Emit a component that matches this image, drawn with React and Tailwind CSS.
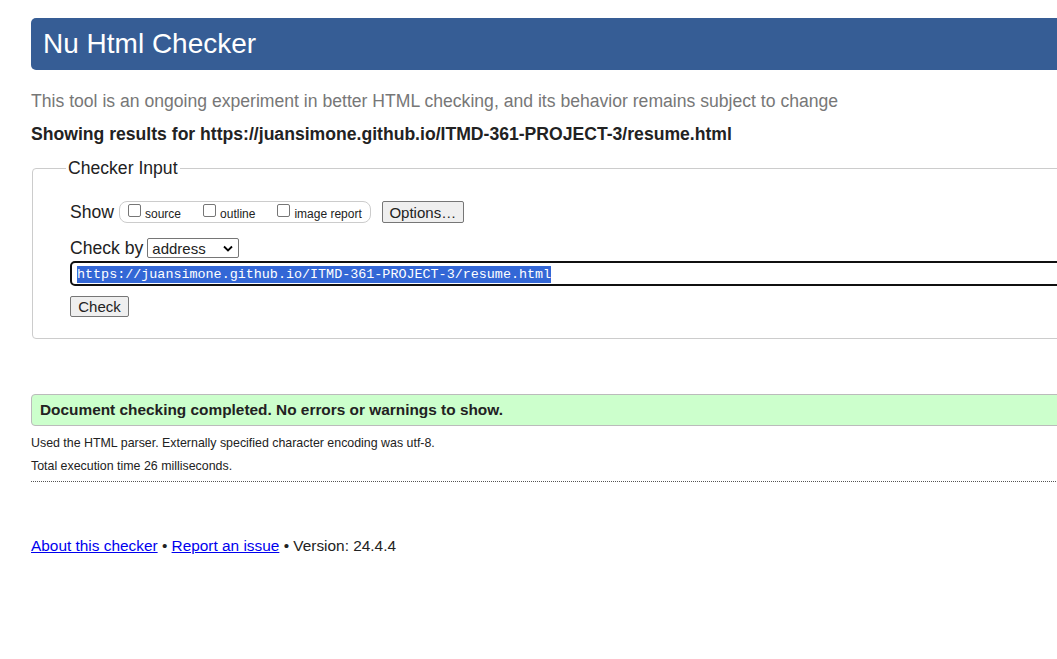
import React from 'react';

const Checkbox = ({ label }) => (
    <label className="flex items-center gap-[4px] shrink-0 whitespace-nowrap">
        <span className="w-[13px] h-[13px] border border-[#767676] rounded-[2px] bg-white inline-block mb-[3px]" />
        <span className="text-[12px] text-[#222] leading-none mt-[3px]">{label}</span>
    </label>
);

const App = () => {
    return (
        <div className="w-screen min-h-screen bg-white overflow-hidden font-['Liberation_Sans',Arial,sans-serif] text-[#222]">
            <div className="pl-[31px] pt-[18px] w-[1120px]">
                <header className="h-[52px] bg-[#365d95] rounded-[5px] flex items-center pl-[12px]">
                    <h1 className="text-white text-[28px] leading-none">Nu Html Checker</h1>
                </header>

                <p className="mt-[21px] text-[17.6px] leading-[20px] text-[#777]">
                    This tool is an ongoing experiment in better HTML checking, and its behavior remains subject to change
                </p>
                <p className="mt-[13px] text-[17.6px] leading-[20px] font-bold text-[#222]">
                    Showing results for https://juansimone.github.io/ITMD-361-PROJECT-3/resume.html
                </p>

                <fieldset className="mt-[14px] ml-[1px] border border-[#ccc] rounded-[4px] pl-[37px] pr-4 pb-[19px] pt-[23px]">
                    <legend className="ml-[-4px] px-[2px] text-[17.6px] leading-[20px] text-[#222]">Checker Input</legend>

                    <div className="flex items-center h-[22px]">
                        <span className="text-[17.6px] mr-[5px]">Show</span>
                        <div className="flex items-center gap-[22px] border border-[#ccc] rounded-[8px] h-[22px] pl-[8px] pr-[8px] shrink-0 whitespace-nowrap">
                            <Checkbox label="source" />
                            <Checkbox label="outline" />
                            <Checkbox label="image report" />
                        </div>
                        <button className="ml-[11px] h-[22px] w-[82px] border border-[#767676] bg-[#efefef] rounded-[2px] text-[15px] leading-none">
                            Options…
                        </button>
                    </div>

                    <div className="flex items-center mt-[15px] h-[20px]">
                        <span className="text-[17.6px] mr-[4px]">Check by</span>
                        <div className="h-[20px] w-[92px] border border-[#767676] rounded-[2px] flex items-center justify-between px-[4px] bg-white">
                            <span className="text-[15px] leading-none">address</span>
                            <svg width="10" height="7" viewBox="0 0 10 7" className="mr-[1px]">
                                <path d="M1 1.5l4 4 4-4" stroke="#000" strokeWidth="1.8" fill="none" />
                            </svg>
                        </div>
                    </div>

                    <div className="mt-[3px] h-[25px] border-2 border-[#101010] rounded-[5px] flex items-center pl-[5px] pt-[1px] bg-white">
                        <span className="bg-[#3367d6] text-white font-['Liberation_Mono',monospace] text-[13.4px] leading-[17px]">
                            https://juansimone.github.io/ITMD-361-PROJECT-3/resume.html
                        </span>
                    </div>

                    <button className="mt-[10px] h-[21px] w-[59px] border border-[#767676] bg-[#efefef] rounded-[2px] text-[15px] leading-none">
                        Check
                    </button>
                </fieldset>

                <div className="mt-[55px] h-[32px] bg-[#ccffcc] border border-[#bbb] rounded-[4px] flex items-center pl-[8px]">
                    <span className="font-bold text-[15.4px]">Document checking completed. No errors or warnings to show.</span>
                </div>

                <p className="mt-[9px] text-[12.4px] leading-[16px]">
                    Used the HTML parser. Externally specified character encoding was utf-8.
                </p>
                <p className="mt-[7px] text-[12.4px] leading-[16px]">Total execution time 26 milliseconds.</p>
                <div className="mt-[7px] border-t border-dotted border-[#555]" />

                <p className="mt-[55px] text-[15.4px] leading-[18px] text-[#222]">
                    <a href="#" className="text-[#0000ee] underline">About this checker</a>
                    {' • '}
                    <a href="#" className="text-[#0000ee] underline">Report an issue</a>
                    {' • Version: 24.4.4'}
                </p>
            </div>
        </div>
    );
};

export default App;
